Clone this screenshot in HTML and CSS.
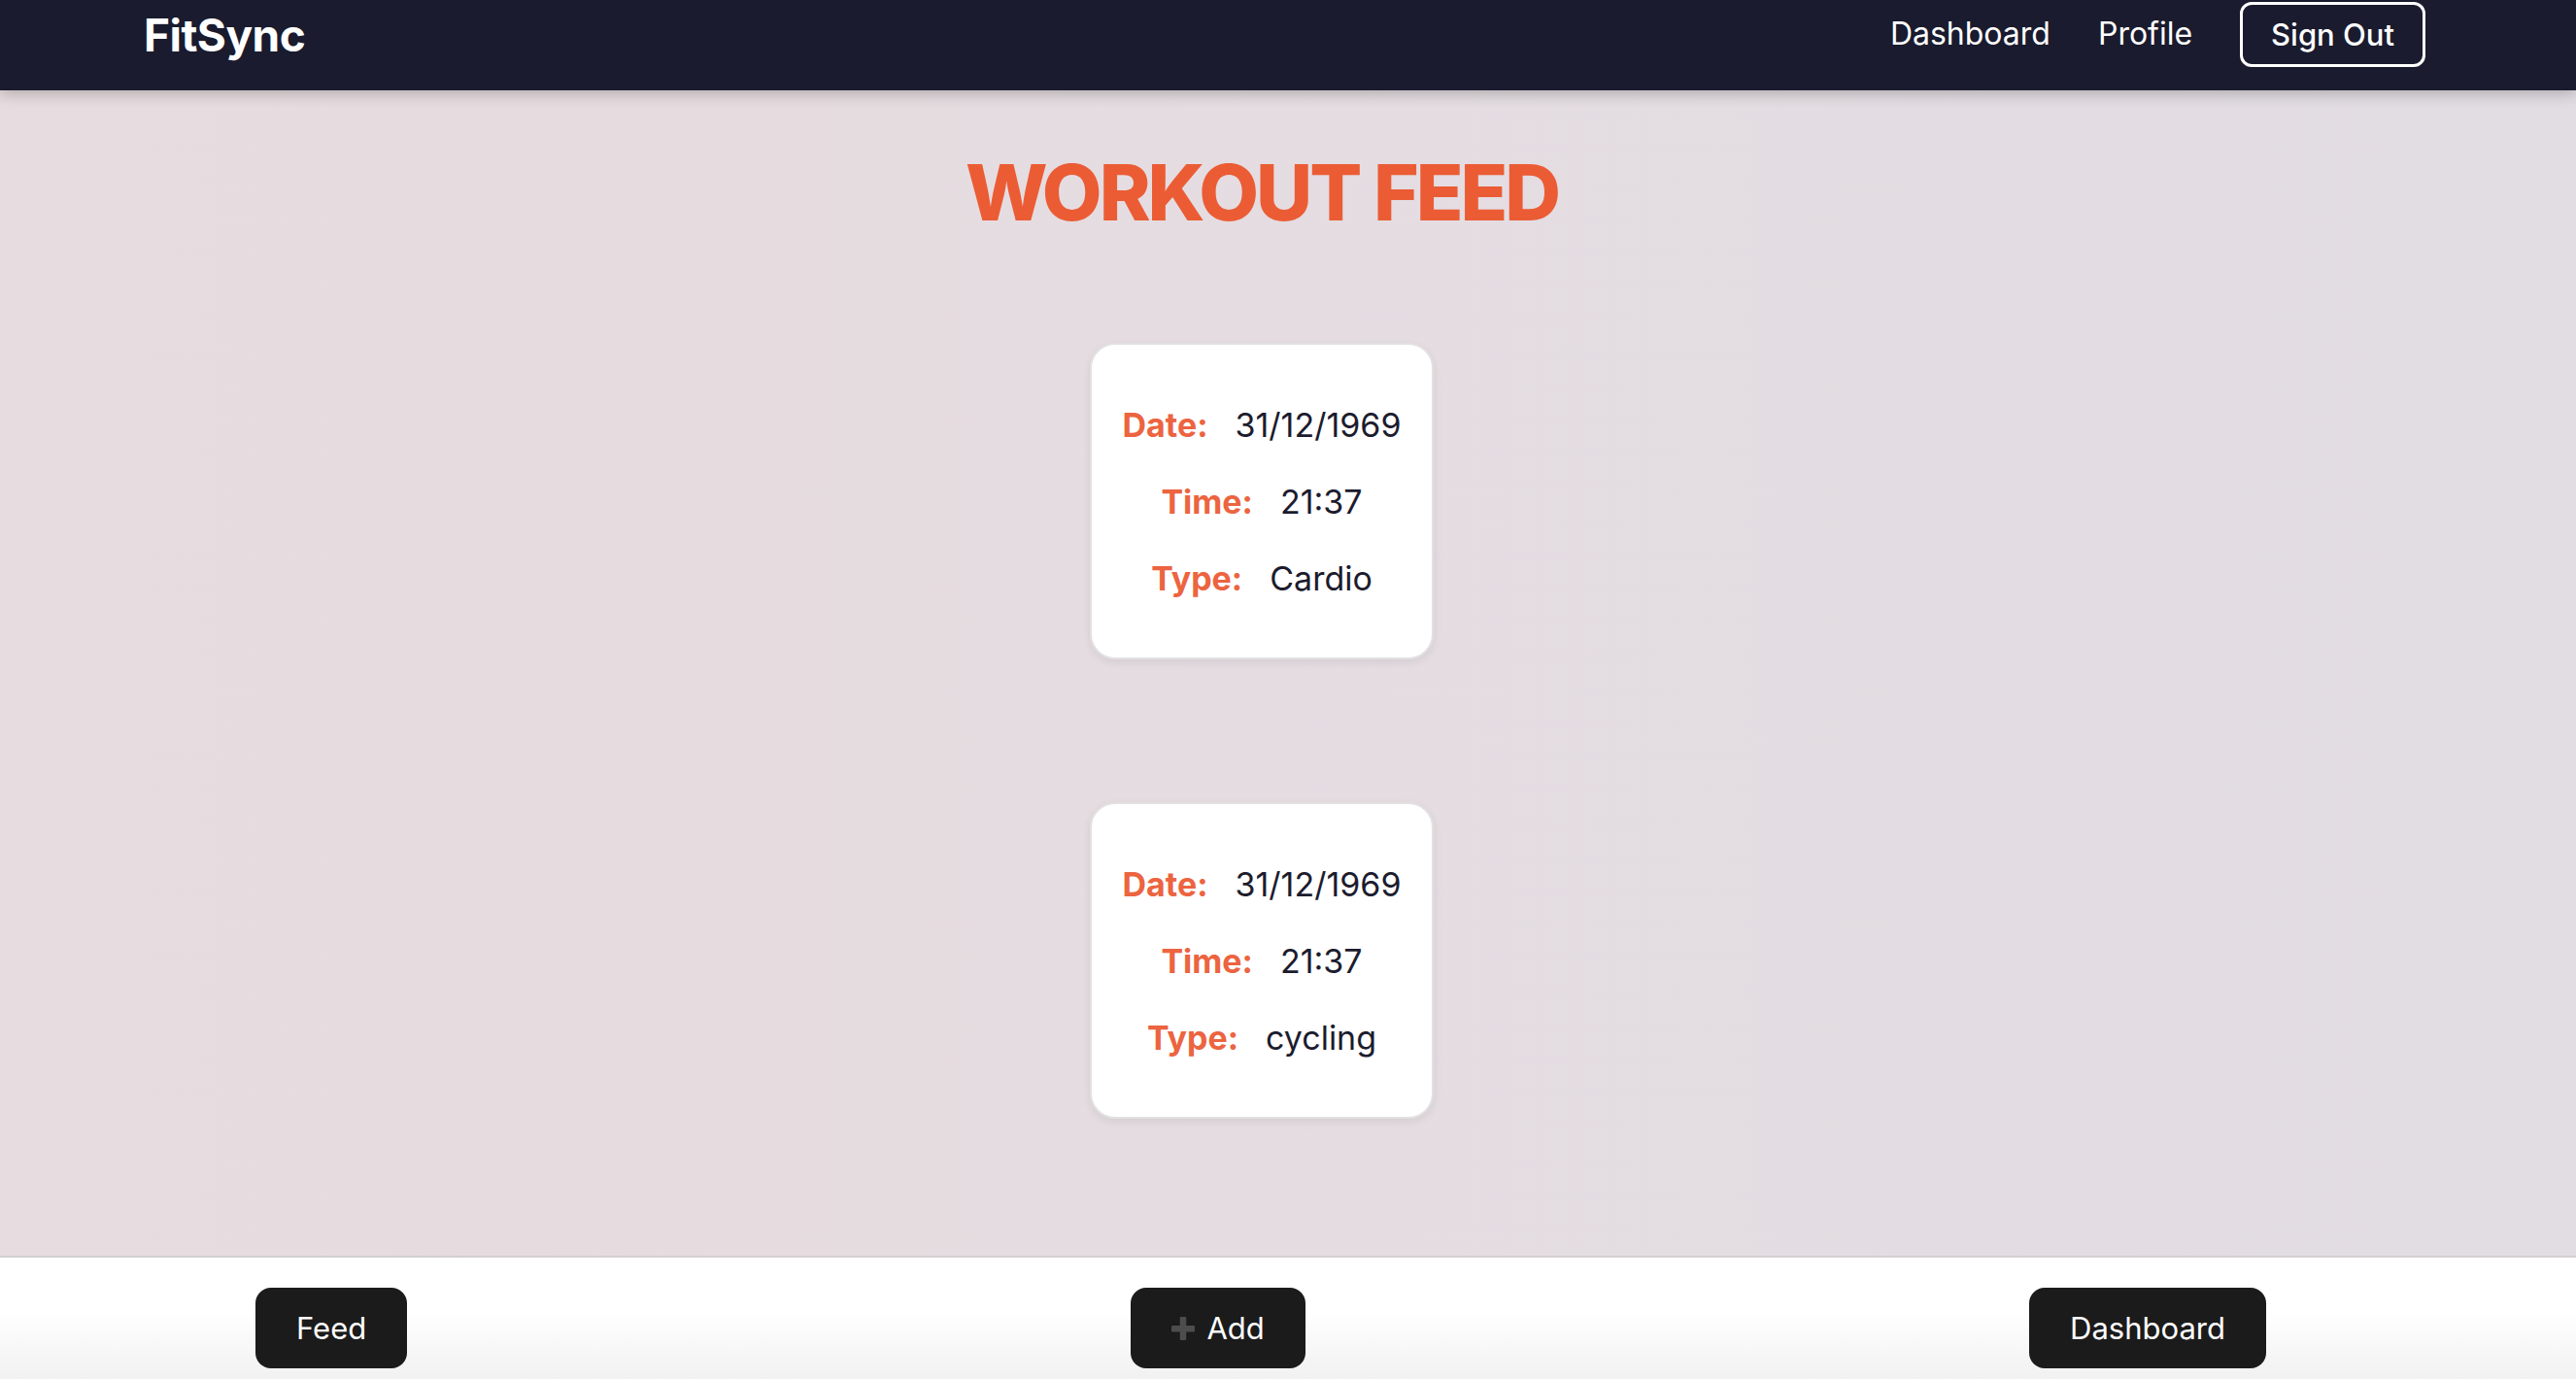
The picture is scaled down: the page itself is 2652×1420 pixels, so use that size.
FILE: index.html
```html
<!DOCTYPE html>
<html lang="en">
<head>
<meta charset="utf-8">
<title>FitSync</title>
<link rel="stylesheet" href="styles.css">
</head>
<body>
  <header class="navbar">
    <div class="logo">FitSync</div>
    <nav class="nav-links">
      <a class="nav-link" href="#">Dashboard</a>
      <a class="nav-link" href="#">Profile</a>
      <button class="signout">Sign Out</button>
    </nav>
  </header>

  <main class="main">
    <h1 class="title">WORKOUT FEED</h1>
    <div class="feed">
      <div class="card">
        <p class="row"><span class="label">Date:</span><span class="value">31/12/1969</span></p>
        <p class="row"><span class="label">Time:</span><span class="value">21:37</span></p>
        <p class="row"><span class="label">Type:</span><span class="value">Cardio</span></p>
      </div>
      <div class="card">
        <p class="row"><span class="label">Date:</span><span class="value">31/12/1969</span></p>
        <p class="row"><span class="label">Time:</span><span class="value">21:37</span></p>
        <p class="row"><span class="label">Type:</span><span class="value">cycling</span></p>
      </div>
    </div>
  </main>

  <footer class="bottombar">
    <button class="bar-btn">Feed</button>
    <button class="bar-btn">
      <svg class="plus" width="24" height="24" viewBox="0 0 24 24" aria-hidden="true">
        <rect x="0" y="9" width="24" height="6.5" rx="1" fill="#4d4d4d"/>
        <rect x="8.75" y="0" width="6.5" height="24" rx="1" fill="#4d4d4d"/>
      </svg>
      <span>Add</span>
    </button>
    <button class="bar-btn">Dashboard</button>
  </footer>
</body>
</html>
```

FILE: styles.css
```css
* {
  box-sizing: border-box;
}

html, body {
  margin: 0;
  height: 100%;
}

body {
  display: flex;
  flex-direction: column;
  height: 100vh;
  overflow: hidden;
  font-family: Inter, "Noto Sans", "Liberation Sans", sans-serif;
  background: linear-gradient(to right, #e7dcdf, #e2dde3);
}

.navbar {
  flex-shrink: 0;
  position: relative;
  z-index: 2;
  height: 93px;
  padding: 0 155px 23px 148px;
  display: flex;
  align-items: center;
  justify-content: space-between;
  background: #1a1b2e;
  box-shadow: 0 4px 14px rgba(0, 0, 0, 0.22);
}

.logo {
  color: #ffffff;
  font-size: 46px;
  font-weight: 700;
  letter-spacing: -0.5px;
  line-height: 1;
  padding-top: 2px;
}

.nav-links {
  display: flex;
  align-items: center;
  gap: 49px;
}

.nav-link {
  color: #ffffff;
  text-decoration: none;
  font-size: 32px;
  font-weight: 400;
  line-height: 1.2;
}

.signout {
  height: 67px;
  padding: 0 29px;
  border: 3px solid #ffffff;
  border-radius: 12px;
  background: transparent;
  color: #ffffff;
  font-family: inherit;
  font-size: 31px;
  font-weight: 500;
  line-height: 1;
}

.main {
  flex: 1;
  display: flex;
  flex-direction: column;
  align-items: center;
  padding: 57px 54px 0 0;
}

.title {
  margin: 0;
  font-size: 80px;
  line-height: 96px;
  font-weight: 800;
  color: #eb5c35;
  letter-spacing: -3px;
}

.feed {
  margin-top: 107px;
  display: flex;
  flex-direction: column;
  align-items: center;
  gap: 147px;
}

.card {
  width: 354px;
  height: 326px;
  padding: 60px 16px;
  background: #ffffff;
  border: 2px solid #e3e0e2;
  border-radius: 26px;
  box-shadow: 0 3px 10px rgba(0, 0, 0, 0.08);
  display: flex;
  flex-direction: column;
  align-items: center;
  gap: 34px;
}

.row {
  margin: 0;
  display: flex;
  justify-content: center;
  gap: 28px;
  font-size: 34px;
  line-height: 45px;
  white-space: nowrap;
}

.label {
  color: #ec6440;
  font-weight: 700;
}

.value {
  color: #1c1c2e;
  font-weight: 400;
}

.bottombar {
  flex-shrink: 0;
  height: 127px;
  padding: 31px 319px 0 263px;
  display: flex;
  align-items: flex-start;
  justify-content: space-between;
  border-top: 2px solid #d3cfd2;
  background: linear-gradient(to bottom, #ffffff 45%, #f1f1f1 100%);
}

.bar-btn {
  height: 83px;
  padding: 0 42px;
  display: flex;
  align-items: center;
  gap: 12px;
  border: none;
  border-radius: 16px;
  background: #1b1b1b;
  color: #ffffff;
  font-family: inherit;
  font-size: 31px;
  font-weight: 400;
  line-height: 1;
}

.plus {
  display: block;
  flex-shrink: 0;
}
```
